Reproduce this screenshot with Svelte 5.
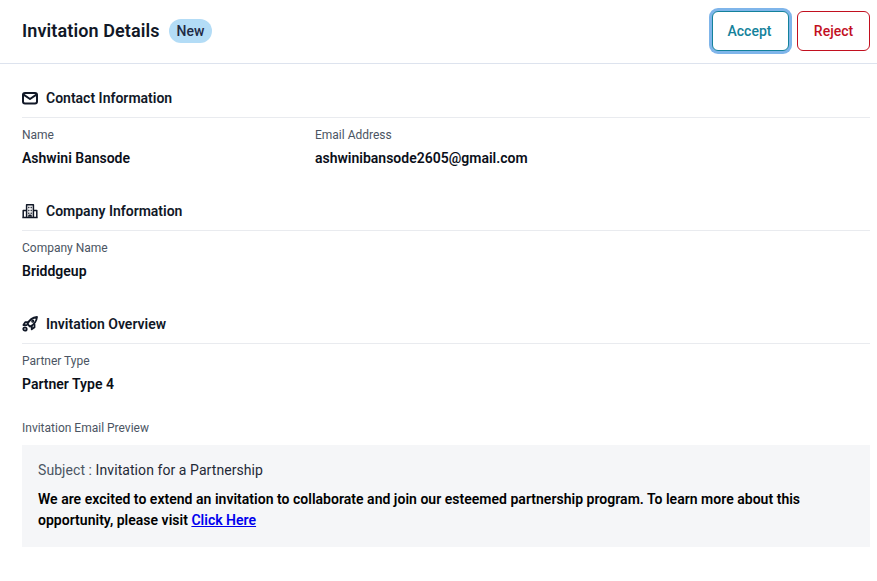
<script>
  let partnerType = 'Partner Type 4';
</script>

<div class="page">
  <header class="top">
    <div class="title">
      <h1>Invitation Details</h1>
      <span class="badge">New</span>
    </div>
    <div class="actions">
      <button class="btn accept">Accept</button>
      <button class="btn reject">Reject</button>
    </div>
  </header>

  <main class="body">
    <section>
      <h2>
        <svg width="16" height="16" viewBox="0 0 16 16" fill="none" stroke="#111827" stroke-width="2" stroke-linejoin="round" stroke-linecap="round">
          <rect x="1" y="3" width="14" height="10.5" rx="2" />
          <path d="M1.6 4.6 8 9l6.4-4.4" />
        </svg>
        Contact Information
      </h2>
      <div class="fields">
        <div class="field name">
          <span class="label">Name</span>
          <span class="value">Ashwini Bansode</span>
        </div>
        <div class="field">
          <span class="label">Email Address</span>
          <span class="value">ashwinibansode2605@gmail.com</span>
        </div>
      </div>
    </section>

    <section>
      <h2>
        <svg width="16" height="16" viewBox="0 0 16 16" fill="none" stroke="#111827" stroke-width="1.5" stroke-linejoin="round">
          <path d="M4.6 14.5V1.8h6.8v12.7" />
          <path d="M1.2 14.5V7.6h3.4M14.8 14.5V7.6h-3.4M0.3 14.5h15.4" />
          <path d="M6.2 4.6h1.2M8.6 4.6h1.2M6.2 7.4h1.2M8.6 7.4h1.2M6.2 10.2h1.2M8.6 10.2h1.2M7 14.5v-2.2h2v2.2" />
        </svg>
        Company Information
      </h2>
      <div class="field">
        <span class="label">Company Name</span>
        <span class="value">Briddgeup</span>
      </div>
    </section>

    <section>
      <h2>
        <svg width="16" height="16" viewBox="0 0 16 16" fill="none" stroke="#111827" stroke-width="1.8" stroke-linejoin="round" stroke-linecap="round">
          <path d="M5.4 8C7.2 4.2 10.4 1.6 15 1c-.5 4.6-3.1 7.8-7 9.6z" />
          <path d="M6 6.2H3.2L1.4 9l3 .2M9.8 10l-.1 3.4 2.8-2.2V8.6" />
          <circle cx="10.8" cy="5.2" r="0.7" />
          <circle cx="3" cy="13" r="1.7" />
        </svg>
        Invitation Overview
      </h2>
      <div class="field">
        <span class="label">Partner Type</span>
        <span class="value">{partnerType}</span>
      </div>
      <div class="preview-block">
        <span class="label">Invitation Email Preview</span>
        <div class="preview">
          <p class="subject"><span>Subject :</span> Invitation for a Partnership</p>
          <p class="message">We are excited to extend an invitation to collaborate and join our esteemed partnership program. To learn more about this opportunity, please visit <a href="#top">Click Here</a></p>
        </div>
      </div>
    </section>
  </main>
</div>

<style>
  :global(body) {
    margin: 0;
    background: #fff;
    font-family: Roboto, "Liberation Sans", sans-serif;
  }

  .page {
    width: 877px;
    height: 581px;
    overflow: hidden;
    box-sizing: border-box;
  }

  .top {
    display: flex;
    align-items: center;
    justify-content: space-between;
    height: 64px;
    box-sizing: border-box;
    padding: 0 7px 1px 22px;
    border-bottom: 1px solid #dde3ee;
  }

  .title {
    display: flex;
    align-items: center;
    gap: 9px;
  }

  h1 {
    margin: 0;
    font-size: 18px;
    line-height: 24px;
    font-weight: 600;
    letter-spacing: 0.1px;
    color: #111827;
  }

  .badge {
    display: block;
    height: 24px;
    line-height: 24px;
    padding: 0 8px;
    border-radius: 12px;
    background: #b3dcf6;
    color: #1f2a44;
    font-size: 14px;
    font-weight: 500;
  }

  .actions {
    display: flex;
    gap: 8px;
  }

  .btn {
    height: 40px;
    border-radius: 6px;
    background: #fff;
    font-family: inherit;
    font-size: 14px;
    font-weight: 500;
    padding: 0;
    cursor: pointer;
  }

  .accept {
    width: 77px;
    padding-right: 2px;
    color: #14829b;
    border: 1px solid #14829b;
    box-shadow: 0 0 0 3px #7fb5ea;
  }

  .reject {
    width: 73px;
    color: #c2101f;
    border: 1px solid #c2101f;
  }

  .body {
    padding: 24px 7px 0 22px;
  }

  section {
    margin-bottom: 33px;
  }

  h2 {
    display: flex;
    align-items: center;
    gap: 8px;
    margin: 0 0 9px;
    height: 30px;
    padding-bottom: 10px;
    box-sizing: border-box;
    border-bottom: 1px solid #e9ebef;
    font-size: 14px;
    font-weight: 600;
    color: #111827;
  }

  .fields {
    display: flex;
  }

  .field {
    display: flex;
    flex-direction: column;
  }

  .name {
    width: 293px;
  }

  .label {
    display: block;
    font-size: 12px;
    line-height: 16px;
    color: #4b5563;
  }

  .value {
    margin-top: 5px;
    font-size: 14px;
    line-height: 20px;
    font-weight: 600;
    color: #0b0f19;
  }

  .preview-block {
    margin-top: 26px;
  }

  .preview {
    margin-top: 9px;
    padding: 15px 16px 16px;
    background: #f5f6f8;
  }

  .preview p {
    margin: 0;
    font-size: 14px;
    line-height: 21px;
  }

  .subject {
    color: #1f2937;
    letter-spacing: 0.07px;
  }

  .subject span {
    color: #4b5563;
  }

  .preview .message {
    margin-top: 8px;
    font-weight: 600;
    letter-spacing: 0.02px;
    color: #000;
  }

  .message a {
    color: #0000ee;
    text-decoration: underline;
  }
</style>
